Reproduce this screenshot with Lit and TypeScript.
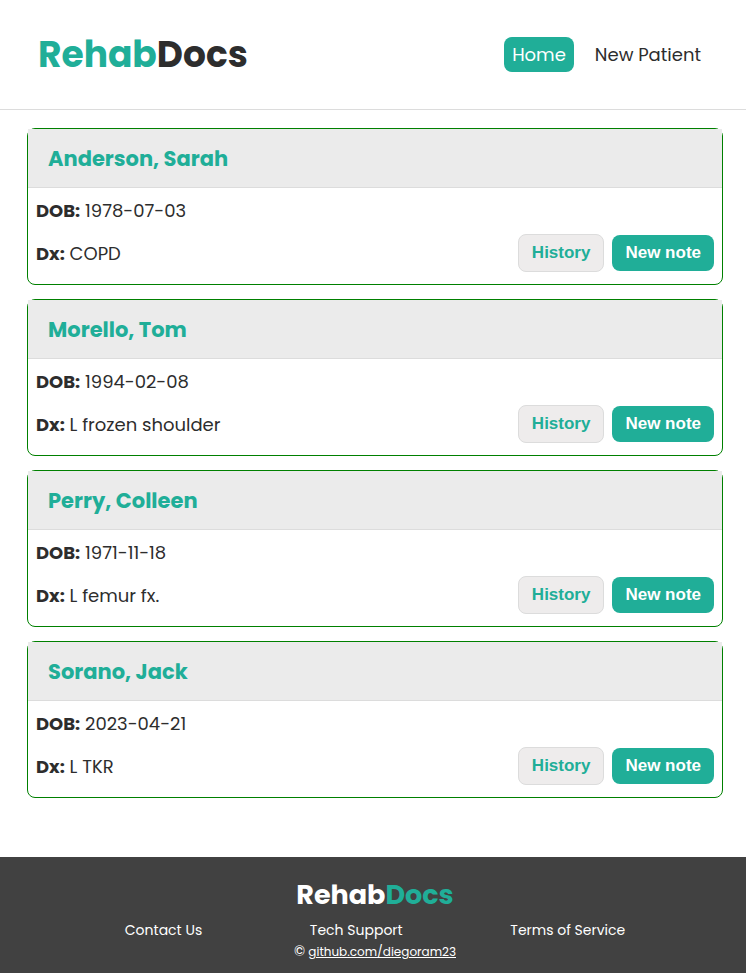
import { LitElement, html, css } from "lit";
import { customElement, property } from "lit/decorators.js";

interface Patient {
  name: string;
  dob: string;
  dx: string;
}

const PATIENTS: Patient[] = [
  { name: "Anderson, Sarah", dob: "1978-07-03", dx: "COPD" },
  { name: "Morello, Tom", dob: "1994-02-08", dx: "L frozen shoulder" },
  { name: "Perry, Colleen", dob: "1971-11-18", dx: "L femur fx." },
  { name: "Sorano, Jack", dob: "2023-04-21", dx: "L TKR" },
];

@customElement("patient-card")
export class PatientCard extends LitElement {
  @property({ attribute: false }) patient!: Patient;

  static styles = css`
    :host {
      display: block;
    }
    .card {
      border: 1px solid green;
      border-radius: 8px;
    }
    .name {
      margin: 0;
      padding: 15px 20px 13px;
      background: #ebebeb;
      border-bottom: 1px solid #dcdcdc;
      color: #20ae98;
      font-size: 21px;
      line-height: 30px;
      font-weight: 700;
    }
    .body {
      padding: 8px 8px 12px;
    }
    .line {
      margin: 0;
      font-size: 18px;
      line-height: 29px;
    }
    .row {
      display: flex;
      align-items: center;
      justify-content: space-between;
      margin-top: 9px;
    }
    .actions {
      display: flex;
      align-items: center;
      gap: 8px;
    }
    .button {
      height: 36px;
      padding: 0 13px;
      border: 0;
      border-radius: 8px;
      background: #20ae98;
      color: #fff;
      font: 700 17px "Liberation Sans", Arial, sans-serif;
      cursor: pointer;
    }
    .secondary {
      height: 38px;
      border: 1px solid #dcdcdc;
      background: #eeecec;
      color: #20ae98;
    }
  `;

  render() {
    const { name, dob, dx } = this.patient;
    return html`
      <article class="card">
        <h2 class="name">${name}</h2>
        <div class="body">
          <p class="line"><strong>DOB:</strong> ${dob}</p>
          <div class="row">
            <p class="line"><strong>Dx:</strong> ${dx}</p>
            <div class="actions">
              <button class="button secondary" type="button">History</button>
              <button class="button" type="button">New note</button>
            </div>
          </div>
        </div>
      </article>
    `;
  }
}

@customElement("app-root")
export class AppRoot extends LitElement {
  static styles = css`
    :host {
      display: flex;
      flex-direction: column;
      min-height: 100vh;
      background: #fff;
      color: #2d2d2d;
      font-family: Poppins, Inter, sans-serif;
    }
    .header {
      display: flex;
      align-items: center;
      justify-content: space-between;
      padding: 26px 37px 26px 38px;
      border-bottom: 1px solid #dcdcdc;
    }
    .logo {
      margin: 0;
      font-size: 36px;
      line-height: 57px;
      font-weight: 700;
    }
    .accent {
      color: #20ae98;
    }
    .nav {
      display: flex;
      gap: 13px;
    }
    .nav-link {
      padding: 4px 8px;
      border-radius: 8px;
      color: inherit;
      font-size: 18px;
      line-height: 27px;
      text-decoration: none;
    }
    .active {
      background: #20ae98;
      color: #fff;
    }
    .list {
      display: grid;
      gap: 14px;
      padding: 18px 23px 58px 27px;
    }
    .footer {
      margin-top: auto;
      padding: 17px 23px 11px 27px;
      background: #414141;
      color: #fff;
      text-align: center;
    }
    .footer-logo {
      margin: 0;
      font-size: 27px;
      line-height: 42px;
      font-weight: 700;
    }
    .links {
      display: flex;
      justify-content: space-around;
      padding: 4px 44px 0;
      font-size: 14px;
      line-height: 21px;
    }
    .footer-link {
      color: inherit;
      text-decoration: none;
    }
    .credit {
      margin: 0;
      font-size: 12px;
      line-height: 20px;
    }
    .copyright {
      font-size: 14px;
    }
    .credit-link {
      color: inherit;
    }
  `;

  render() {
    return html`
      <header class="header">
        <h1 class="logo"><span class="accent">Rehab</span>Docs</h1>
        <nav class="nav">
          <a class="nav-link active" href="#home">Home</a>
          <a class="nav-link" href="#new-patient">New Patient</a>
        </nav>
      </header>
      <main class="list">
        ${PATIENTS.map((p) => html`<patient-card .patient=${p}></patient-card>`)}
      </main>
      <footer class="footer">
        <p class="footer-logo">Rehab<span class="accent">Docs</span></p>
        <nav class="links">
          <a class="footer-link" href="#contact">Contact Us</a>
          <a class="footer-link" href="#support">Tech Support</a>
          <a class="footer-link" href="#terms">Terms of Service</a>
        </nav>
        <p class="credit">
          <span class="copyright">©</span>
          <a class="credit-link" href="https://github.com/diegoram23">github.com/diegoram23</a>
        </p>
      </footer>
    `;
  }
}
